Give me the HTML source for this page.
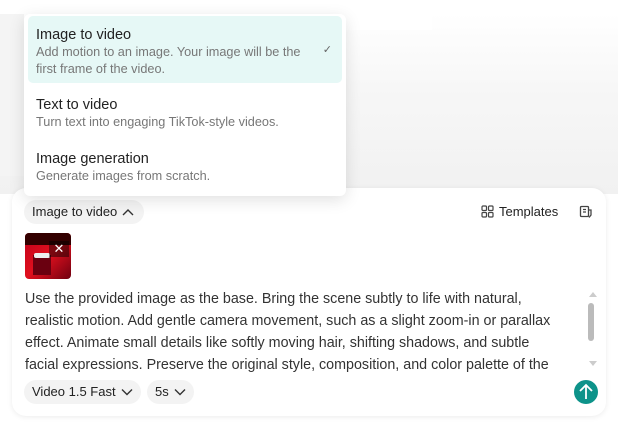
<!DOCTYPE html>
<html><head><style>
*{margin:0;padding:0;box-sizing:border-box}
body{width:618px;height:424px;overflow:hidden;font-family:"Liberation Sans",sans-serif;background:#fff;position:relative}
.bg{position:absolute;left:0;top:14px;width:618px;height:180px;background:linear-gradient(#fff 0%,#f7f7f7 40%,#f1f1f1 100%)}
.lb{position:absolute;left:0;top:14px;width:24px;height:162px;background:#f4f4f4}
.wb{position:absolute;left:310px;top:7px;width:122px;height:23px;background:#fff}
.card{position:absolute;left:12px;top:188px;width:594px;height:228px;background:#fff;border-radius:14px;box-shadow:0 1px 6px rgba(0,0,0,.08)}
.menu{position:absolute;left:24px;top:14px;width:322px;height:182px;background:#fff;border-radius:6px;box-shadow:0 4px 16px rgba(0,0,0,.12);z-index:5}
.it{position:absolute;left:4px;width:314px;padding-left:8px}
.sel{top:2px;height:67px;background:#e6f8f6;border-radius:5px}
.t{font-size:14.5px;color:#222;margin-top:11px}
.d{font-size:12.7px;color:#777;line-height:17px;margin-top:1px}
.pill{position:absolute;background:#f3f3f3;border-radius:12px;font-size:13px;color:#222;height:24px;line-height:24px;padding:0 8px}
.pill svg{margin-left:5px}
.txt{position:absolute;left:25px;top:288px;width:532px;font-size:14.3px;line-height:22px;color:#333}
</style></head><body>
<div class="bg"></div><div class="lb"></div><div class="wb"></div>
<div class="menu">
 <div class="it sel"><div class="t">Image to video</div><div class="d">Add motion to an image. Your image will be the<br>first frame of the video.</div>
 <span style="position:absolute;right:10px;top:27px;font-size:11px;color:#666">✓</span></div>
 <div class="it" style="top:72px"><div class="t">Text to video</div><div class="d">Turn text into engaging TikTok-style videos.</div></div>
 <div class="it" style="top:126px"><div class="t">Image generation</div><div class="d">Generate images from scratch.</div></div>
</div>
<div class="card"></div>
<div class="pill" style="left:24px;top:200px;padding-right:10px">Image to video<svg width="12" height="8" viewBox="0 0 12 8"><path d="M1 7L6 2L11 7" fill="none" stroke="#333" stroke-width="1.4"/></svg></div>
<svg style="position:absolute;left:481px;top:205px" width="13" height="13" viewBox="0 0 13 13" fill="none" stroke="#444" stroke-width="1.2"><rect x="1" y="1" width="4.5" height="4.5" rx="1"/><rect x="7.5" y="1" width="4.5" height="4.5" rx="1"/><rect x="1" y="7.5" width="4.5" height="4.5" rx="1"/><rect x="7.5" y="7.5" width="4.5" height="4.5" rx="1"/></svg>
<div style="position:absolute;left:499px;top:204px;font-size:13px;color:#222">Templates</div>
<svg style="position:absolute;left:579px;top:205px" width="14" height="14" viewBox="0 0 14 14" fill="none" stroke="#444" stroke-width="1.3"><rect x="1.5" y="1.5" width="8" height="10" rx="1"/><path d="M4 4.5h3M4 7h3M9.5 5h2.5v5l-2 2.5"/></svg>
<div style="position:absolute;left:25px;top:233px;width:46px;height:46px;border-radius:4px;background:linear-gradient(135deg,#c0001a,#e0101e 50%,#700010);overflow:hidden">
 <div style="position:absolute;left:0;top:0;width:46px;height:12px;background:#300"></div>
 <div style="position:absolute;left:8px;top:22px;width:18px;height:20px;background:#6a0010"></div>
 <div style="position:absolute;left:9px;top:20px;width:16px;height:5px;background:#eee;border-radius:2px"></div>
 <div style="position:absolute;left:24px;top:8px;width:20px;height:16px;background:rgba(0,0,0,.45);color:#fff;font-size:13px;text-align:center;line-height:16px">✕</div>
</div>
<div class="txt">Use the provided image as the base. Bring the scene subtly to life with natural, realistic motion. Add gentle camera movement, such as a slight zoom-in or parallax effect. Animate small details like softly moving hair, shifting shadows, and subtle facial expressions. Preserve the original style, composition, and color palette of the</div>
<div style="position:absolute;left:589px;top:292px;width:0;height:0;border-left:4px solid transparent;border-right:4px solid transparent;border-bottom:5px solid #ccc"></div>
<div style="position:absolute;left:588px;top:303px;width:6px;height:38px;background:#bbb;border-radius:3px"></div>
<div style="position:absolute;left:589px;top:361px;width:0;height:0;border-left:4px solid transparent;border-right:4px solid transparent;border-top:5px solid #ccc"></div>
<div class="pill" style="left:24px;top:380px">Video 1.5 Fast<svg width="12" height="8" viewBox="0 0 12 8"><path d="M1 1.5L6 6.5L11 1.5" fill="none" stroke="#333" stroke-width="1.4"/></svg></div>
<div class="pill" style="left:147px;top:380px">5s<svg width="12" height="8" viewBox="0 0 12 8"><path d="M1 1.5L6 6.5L11 1.5" fill="none" stroke="#333" stroke-width="1.4"/></svg></div>
<div style="position:absolute;left:574px;top:380px;width:24px;height:24px;border-radius:50%;background:#0d938a">
<svg width="24" height="24" viewBox="0 0 24 24" fill="none" stroke="#fff" stroke-width="1.8"><path d="M12 19V5M6 11l6-6 6 6"/></svg></div>
</body></html>
